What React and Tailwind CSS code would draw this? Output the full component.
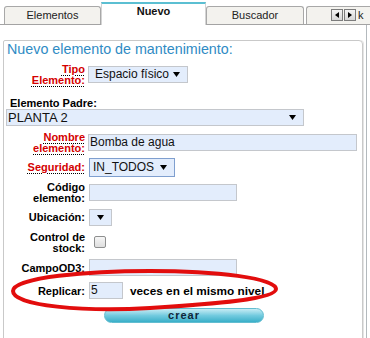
function Caret() {
  return (
    <svg width="7" height="5" viewBox="0 0 7 5" className="shrink-0">
      <path d="M0 0 L7 0 L3.5 5 Z" fill="#000" />
    </svg>
  );
}

export default function App() {
  const redLbl = "text-[#d40000]";
  const dotted = "underline decoration-dotted decoration-black decoration-1 underline-offset-[2px]";
  const lbl = "w-[81px] shrink-0 text-right text-[11px] leading-[11px] font-bold";
  const inp = "h-[17px] border border-[#c4c7cc] bg-[#e3edfc] text-[12px] leading-[15px] text-[#111] flex items-center";
  return (
    <div className="relative w-[370px] h-[338px] overflow-hidden bg-white font-['Liberation_Sans',Arial,sans-serif] text-black">
      {/* Tab bar */}
      <div className="flex items-end h-[25px] border-b border-[#a3a3a3] pl-[4px]">
        <div className="w-[97px] h-[18px] border-l border-t border-r border-[#a8a8a8] rounded-t-[3px] bg-[#f3f2ee] text-center text-[11px] leading-[13px] pt-[2px] text-[#222]">
          Elementos
        </div>
        <div className="w-[105px] h-[23px] -mb-px border-t-2 border-t-[#5bbfd2] border-l border-r border-l-[#d4d4d4] border-r-[#d4d4d4] bg-white text-center text-[11px] leading-[13px] pt-[1px] font-bold text-[#111]">
          Nuevo
        </div>
        <div className="w-[98px] h-[18px] border-l border-t border-r border-[#a8a8a8] rounded-t-[3px] bg-[#f3f2ee] text-center text-[11px] leading-[13px] pt-[2px] text-[#222]">
          Buscador
        </div>
        <div className="ml-[2px] flex-1 h-[18px] border-l border-t border-[#a8a8a8] rounded-tl-[3px] bg-[#f3f2ee] flex items-start pt-[2px] pl-[24px] overflow-hidden">
          <div className="w-[12px] h-[12px] border border-[#7c7c7c] bg-linear-to-b from-[#f4f4f4] to-[#d6d6d6] flex items-center justify-center">
            <svg width="4" height="6" viewBox="0 0 4 6"><path d="M4 0 L0 3 L4 6 Z" fill="#000" /></svg>
          </div>
          <div className="ml-px w-[12px] h-[12px] border border-[#7c7c7c] bg-linear-to-b from-[#f4f4f4] to-[#d6d6d6] flex items-center justify-center">
            <svg width="4" height="6" viewBox="0 0 4 6"><path d="M0 0 L4 3 L0 6 Z" fill="#000" /></svg>
          </div>
          <span className="ml-[2px] text-[11px] leading-[13px] text-[#222]">k</span>
        </div>
      </div>

      {/* Panel */}
      <div className="w-[367px] h-[313px] border-r border-[#b3b9bd] pt-[15px]">
        <div className="ml-[3px] w-[360px] h-[320px] border border-[#c9c9c9] rounded-tr-[4px] rounded-tl-[2px] shadow-[1px_0_0_#e4e4e4]">
          <div className="pl-[3px] h-[16px] text-[14.3px] leading-[16px] text-[#2f8bc4]">
            Nuevo elemento de mantenimiento:
          </div>

          {/* Tipo */}
          <div className="mt-[5px] h-[25px] flex items-center">
            <div className={`${lbl} ${redLbl}`}>
              <span className={dotted}>Tipo<br />Elemento:</span>
            </div>
            <div className={`${inp} ml-[3px] w-[100px] pl-[6px] gap-[4px]`}>
              <span>Espacio físico</span>
              <Caret />
            </div>
          </div>

          {/* Elemento Padre */}
          <div className="mt-[10px] h-[12px] pl-[6px] text-[11px] leading-[12px] font-bold">
            Elemento Padre:
          </div>
          <div className={`${inp} ml-[2px] w-[298px] pl-[1px] text-[13px] justify-between pr-[7px]`}>
            <span>PLANTA 2</span>
            <Caret />
          </div>

          {/* Nombre */}
          <div className="mt-[4px] h-[25px] flex items-center">
            <div className={`${lbl} ${redLbl}`}>
              <span className={dotted}>Nombre<br />elemento:</span>
            </div>
            <div className={`${inp} ml-[3px] w-[269px] pl-[1px]`}>Bomba de agua</div>
          </div>

          {/* Seguridad */}
          <div className="h-[25px] flex items-center">
            <div className={`${lbl} ${redLbl}`}>
              <span className={dotted}>Seguridad:</span>
            </div>
            <div className="ml-[4px] w-[86px] h-[19px] border border-[#7f9fcf] bg-[#e3edfc] text-[12px] leading-[15px] text-[#111] flex items-center pl-[3px] gap-[6px]">
              <span>IN_TODOS</span>
              <Caret />
            </div>
          </div>

          {/* Código */}
          <div className="h-[25px] flex items-center">
            <div className={lbl}>Código<br />elemento:</div>
            <div className={`${inp} ml-[4px] w-[148px]`}></div>
          </div>

          {/* Ubicación */}
          <div className="h-[25px] flex items-center">
            <div className={lbl}>Ubicación:</div>
            <div className={`${inp} ml-[4px] w-[23px] justify-center`}>
              <Caret />
            </div>
          </div>

          {/* Control de stock */}
          <div className="h-[26px] flex items-center">
            <div className={lbl}>Control de<br />stock:</div>
            <div className="ml-[9px] -mt-[3px] w-[12px] h-[12px] border border-[#8e8f8f] rounded-[2px] bg-linear-to-b from-[#f6f6f6] to-[#dedede]"></div>
          </div>

          {/* CampoOD3 */}
          <div className="h-[23px] flex items-center">
            <div className={`${lbl} leading-[12px]`}>CampoOD3:</div>
            <div className={`${inp} ml-[4px] w-[148px]`}></div>
          </div>

          {/* Replicar */}
          <div className="h-[23px] flex items-center">
            <div className={`${lbl} leading-[12px]`}>Replicar:</div>
            <div className={`${inp} ml-[4px] w-[34px] pl-[1px]`}>5</div>
            <div className="ml-[7px] text-[11.8px] leading-[14px] font-bold">veces en el mismo nivel</div>
          </div>

          {/* crear */}
          <div className="mt-[6px] ml-[100px] w-[160px] h-[15px] rounded-full border border-[#62bdd0] bg-linear-to-b from-[#c6ecf4] via-[#72cbdf] to-[#38afc8] flex items-center justify-center text-[11px] leading-[11px] font-bold tracking-[1px] text-[#10273a]">
            crear
          </div>
        </div>
      </div>

      {/* Hand-drawn red ellipse annotation */}
      <svg className="absolute left-0 top-0 pointer-events-none" width="370" height="338" viewBox="0 0 370 338">
        <path
          d="M13,291 C13,277 90,271 150,271 C216,271 276,278 276,289 C276,299 215,304 150,308 C85,312 13,306 13,291 Z"
          fill="none"
          stroke="#e20d0d"
          strokeWidth="4"
        />
      </svg>
    </div>
  );
}
